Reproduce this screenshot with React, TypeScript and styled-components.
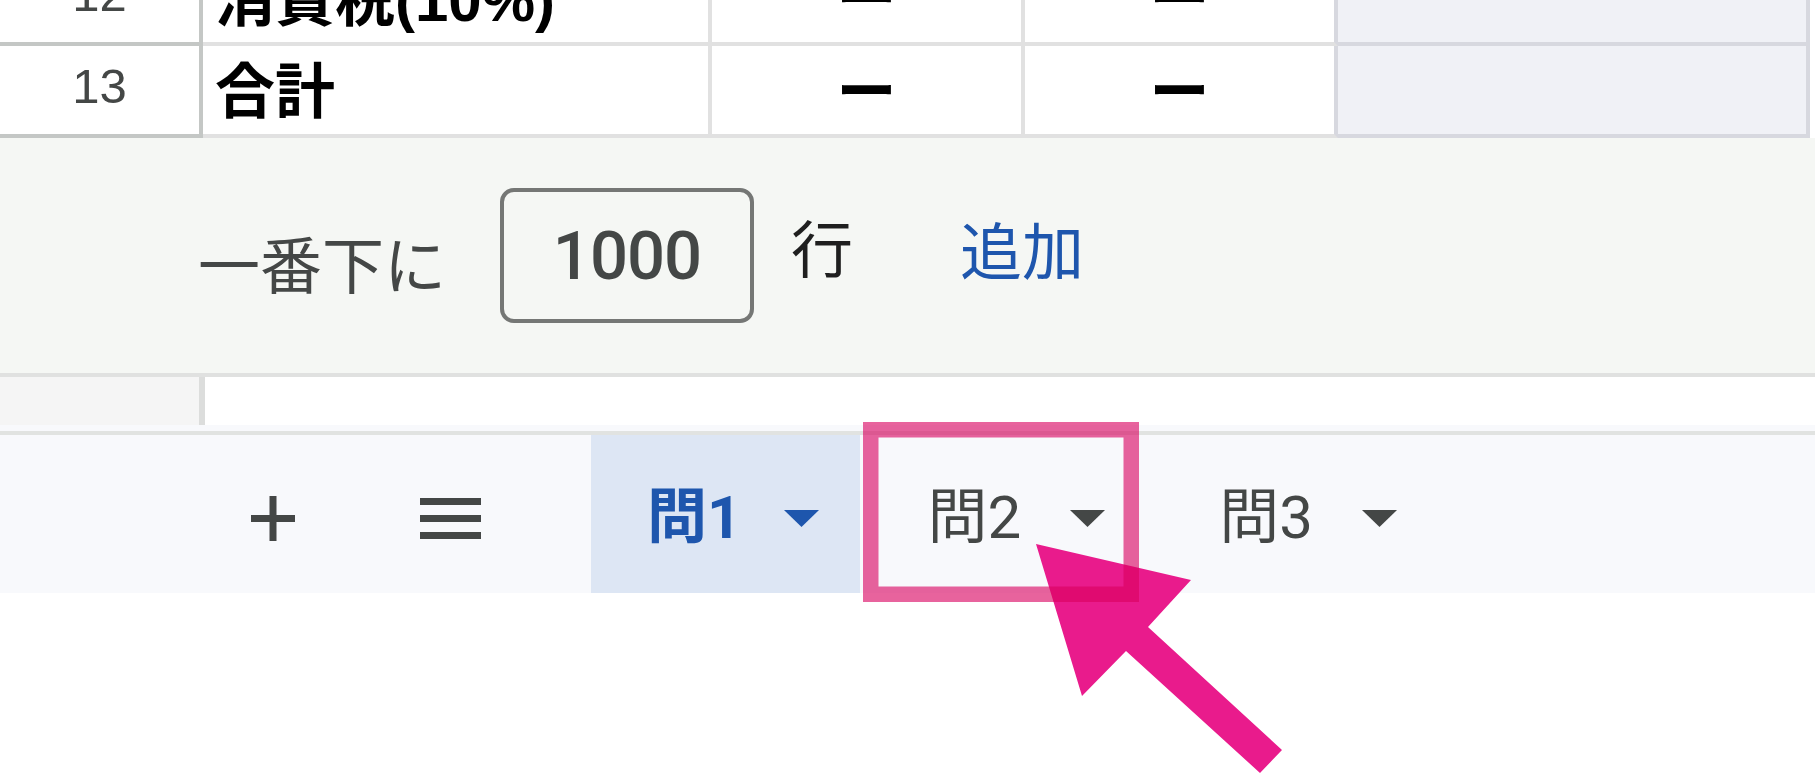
import React from 'react';
import styled, { createGlobalStyle } from 'styled-components';

const GlobalStyle = createGlobalStyle`
  html, body {
    margin: 0;
    padding: 0;
    background: #ffffff;
  }
  body {
    font-family: Roboto, "Noto Sans CJK JP", sans-serif;
    overflow: hidden;
  }
`;

const Page = styled.div`
  position: relative;
  width: 1815px;
  height: 775px;
  overflow: hidden;
  background: #ffffff;
`;

const Grid = styled.div`
  margin-top: -46px;
`;

const Row = styled.div`
  display: grid;
  grid-template-columns: 203px 509px 313px 313px 472px 1fr;
  height: 92px;
`;

const RowHeader = styled.div`
  box-sizing: border-box;
  display: flex;
  align-items: center;
  justify-content: center;
  padding-bottom: 9px;
  background: #ffffff;
  border-right: 4px solid #c4c7c5;
  border-bottom: 4px solid #c4c7c5;
  font-family: "Liberation Sans", Arial, sans-serif;
  font-size: 49px;
  color: #444746;
`;

const Cell = styled.div<{ $center?: boolean; $shade?: boolean; $edge?: boolean }>`
  box-sizing: border-box;
  display: flex;
  align-items: center;
  justify-content: ${(p) => (p.$center ? 'center' : 'flex-start')};
  padding: 0 12px 7px;
  background: ${(p) => (p.$shade ? '#f0f1f6' : '#ffffff')};
  border-right: 4px solid ${(p) => (p.$shade || p.$edge ? '#d7d8df' : '#e1e1e1')};
  border-bottom: 4px solid ${(p) => (p.$shade ? '#d7d8df' : '#e1e1e1')};
  font-family: "Liberation Sans", "Noto Sans CJK JP", sans-serif;
  font-weight: 700;
  font-size: 60px;
  color: #000000;
  white-space: nowrap;
  overflow: hidden;
`;

const Filler = styled.div`
  background: #ffffff;
`;

const AddRowsPanel = styled.div`
  display: flex;
  align-items: center;
  height: 235px;
  padding-left: 198px;
  background: #f5f7f4;
  border-bottom: 4px solid #e0e1e0;
`;

const PanelText = styled.span<{ $tone?: 'muted' | 'dark' | 'link'; $shift?: number }>`
  font-family: "Noto Sans CJK JP", sans-serif;
  font-size: 62px;
  line-height: 1.2;
  color: ${(p) => (p.$tone === 'link' ? '#1e56ad' : p.$tone === 'dark' ? '#1f1f1f' : '#444746')};
  margin-top: ${(p) => (p.$shift && p.$shift > 0 ? p.$shift * 2 : 0)}px;
  margin-bottom: ${(p) => (p.$shift && p.$shift < 0 ? -p.$shift * 2 : 0)}px;
`;

const CountBox = styled.div`
  box-sizing: border-box;
  display: flex;
  align-items: center;
  justify-content: center;
  width: 254px;
  height: 135px;
  margin: 0 37px 0 54px;
  border: 4px solid #757775;
  border-radius: 14px;
  font-family: Roboto, sans-serif;
  font-size: 67px;
  font-weight: 500;
  letter-spacing: -1px;
  color: #444746;
`;

const AddLink = styled(PanelText)`
  margin-left: 107px;
`;

const BlankRow = styled.div`
  display: flex;
  height: 48px;
`;

const BlankHeader = styled.div`
  width: 199px;
  background: #f5f5f5;
  border-right: 6px solid #dcdddc;
`;

const TabBar = styled.div`
  background: #f8f9fc;
  padding-top: 6px;
`;

const TabStrip = styled.div`
  display: flex;
  align-items: stretch;
  height: 150px;
  padding: 8px 0 0 223px;
  border-top: 4px solid #e1e3e1;
`;

const IconButton = styled.div<{ $gap?: number }>`
  display: flex;
  align-items: center;
  justify-content: center;
  width: 100px;
  margin-left: ${(p) => p.$gap ?? 0}px;
  color: #444746;
`;

const TabList = styled.div`
  display: flex;
  align-items: stretch;
  margin-left: 91px;
  margin-top: -8px;
`;

const Tab = styled.div<{ $active?: boolean }>`
  display: flex;
  align-items: center;
  padding: 8px ${(p) => (p.$active ? 41 : 47)}px 0 56px;
  background: ${(p) => (p.$active ? '#dde6f4' : 'transparent')};
  color: ${(p) => (p.$active ? '#1e56ad' : '#444746')};

  & + & {
    margin-left: 11px;
  }
`;

const TabLabel = styled.span<{ $active?: boolean }>`
  font-family: Roboto, "Noto Sans CJK JP", sans-serif;
  font-size: 60px;
  font-weight: ${(p) => (p.$active ? 700 : 400)};
  line-height: 1.2;
  white-space: nowrap;
`;

const Caret = styled.svg<{ $active?: boolean }>`
  display: block;
  margin-left: ${(p) => (p.$active ? 43 : 49)}px;
`;

const Overlay = styled.svg`
  position: absolute;
  top: 0;
  left: 0;
  pointer-events: none;
`;

const PlusIcon = () => (
  <svg width="44" height="45" viewBox="0 0 44 45">
    <rect x="18.5" y="0" width="7" height="45" fill="currentColor" />
    <rect x="0" y="19" width="44" height="7" fill="currentColor" />
  </svg>
);

const MenuIcon = () => (
  <svg width="61" height="41" viewBox="0 0 61 41">
    <rect x="0" y="0" width="61" height="7" fill="currentColor" />
    <rect x="0" y="17" width="61" height="7" fill="currentColor" />
    <rect x="0" y="34" width="61" height="7" fill="currentColor" />
  </svg>
);

const DropCaret = ({ active }: { active?: boolean }) => (
  <Caret $active={active} width="35" height="17" viewBox="0 0 35 17">
    <polygon points="0,0 35,0 17.5,17" fill="currentColor" />
  </Caret>
);

type SheetRow = { num: string; label: string };

const rows: SheetRow[] = [
  { num: '12', label: '消費税(10%)' },
  { num: '13', label: '合計' },
];

const tabs = [
  { name: '問1', active: true },
  { name: '問2', active: false },
  { name: '問3', active: false },
];

export default function App() {
  return (
    <Page>
      <GlobalStyle />
      <Grid>
        {rows.map((r) => (
          <Row key={r.num}>
            <RowHeader>{r.num}</RowHeader>
            <Cell>{r.label}</Cell>
            <Cell $center>ー</Cell>
            <Cell $center $edge>ー</Cell>
            <Cell $shade />
            <Filler />
          </Row>
        ))}
      </Grid>
      <AddRowsPanel>
        <PanelText $shift={7}>一番下に</PanelText>
        <CountBox>1000</CountBox>
        <PanelText $tone="dark" $shift={-9}>行</PanelText>
        <AddLink $tone="link" $shift={-7}>追加</AddLink>
      </AddRowsPanel>
      <BlankRow>
        <BlankHeader />
      </BlankRow>
      <TabBar>
        <TabStrip>
          <IconButton>
            <PlusIcon />
          </IconButton>
          <IconButton $gap={77}>
            <MenuIcon />
          </IconButton>
          <TabList>
            {tabs.map((t) => (
              <Tab key={t.name} $active={t.active}>
                <TabLabel $active={t.active}>{t.name}</TabLabel>
                <DropCaret active={t.active} />
              </Tab>
            ))}
          </TabList>
        </TabStrip>
      </TabBar>
      <Overlay width="1815" height="775" viewBox="0 0 1815 775">
        <polygon
          points="1036,544 1191,580 1148,627 1282,750 1260,773 1126,651 1082,696"
          fill="#e91b8c"
        />
        <rect
          x="870.75"
          y="429.75"
          width="260.5"
          height="164.5"
          fill="none"
          stroke="rgba(217, 0, 95, 0.61)"
          strokeWidth="15.5"
        />
      </Overlay>
    </Page>
  );
}
